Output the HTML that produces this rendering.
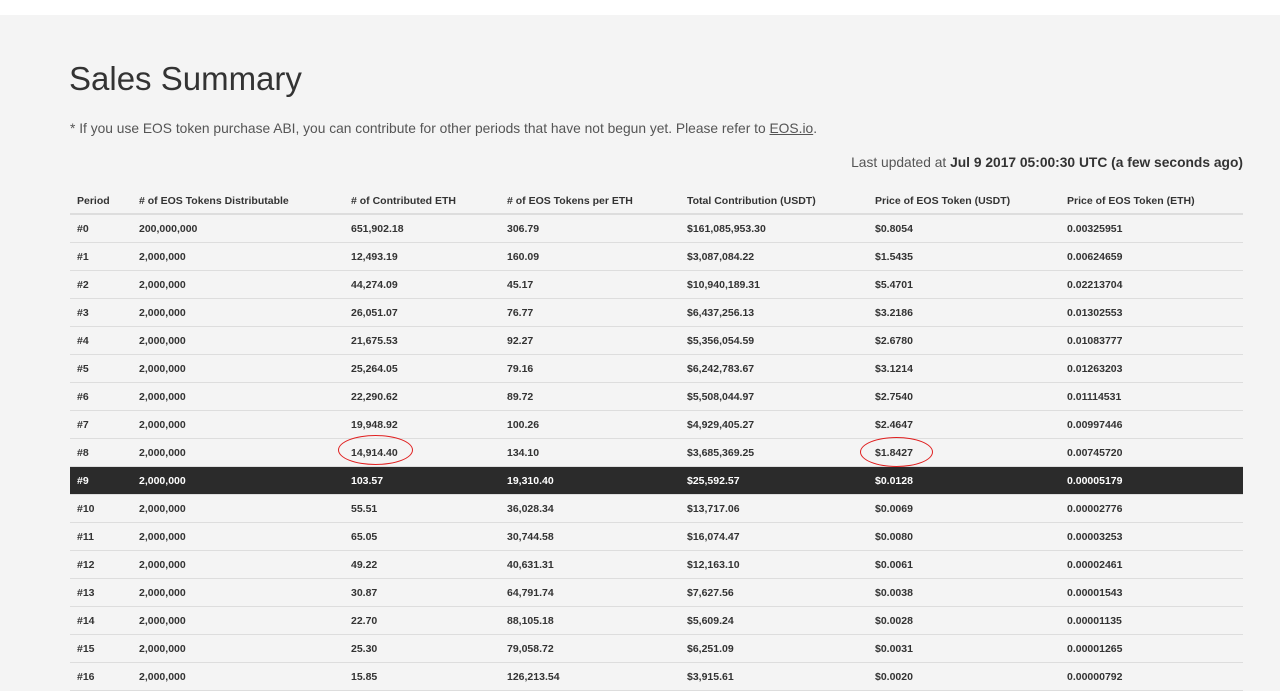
<!DOCTYPE html><html><head><style>
body{margin:0;background:#f4f4f4;font-family:"Liberation Sans",sans-serif;color:#333;width:1280px;height:689px;overflow:hidden;position:relative}
.top{position:absolute;left:0;top:0;width:1280px;height:15px;background:#fff}
h1{position:absolute;left:69px;top:60px;margin:0;font-weight:normal;font-size:33px;color:#333}
.note{position:absolute;left:70px;top:121px;font-size:13.8px;color:#555}
.note u{color:#555}
.upd{position:absolute;right:37px;top:155px;font-size:13.8px;color:#555}
.upd b{color:#333}
table{position:absolute;left:70px;top:189px;width:1173px;border-collapse:collapse;font-size:10.5px;font-weight:bold}
td,th{text-align:left;padding:0 0 0 7px;height:27px;border-bottom:1px solid #ddd;white-space:nowrap}
th{height:24px;border-bottom:2px solid #ddd}
tr.d td{background:#2b2b2b;color:#fff}
.c{position:absolute;border:1.5px solid #e02020;border-radius:50%}
</style></head><body>
<div class="top"></div>
<h1>Sales Summary</h1>
<div class="note">* If you use EOS token purchase ABI, you can contribute for other periods that have not begun yet. Please refer to <u>EOS.io</u>.</div>
<div class="upd">Last updated at <b>Jul 9 2017 05:00:30 UTC (a few seconds ago)</b></div>
<table>
<colgroup><col style="width:62px"><col style="width:212px"><col style="width:156px"><col style="width:180px"><col style="width:188px"><col style="width:192px"><col></colgroup>
<tr><th>Period</th><th># of EOS Tokens Distributable</th><th># of Contributed ETH</th><th># of EOS Tokens per ETH</th><th>Total Contribution (USDT)</th><th>Price of EOS Token (USDT)</th><th>Price of EOS Token (ETH)</th></tr>
<tr><td>#0</td><td>200,000,000</td><td>651,902.18</td><td>306.79</td><td>$161,085,953.30</td><td>$0.8054</td><td>0.00325951</td></tr>
<tr><td>#1</td><td>2,000,000</td><td>12,493.19</td><td>160.09</td><td>$3,087,084.22</td><td>$1.5435</td><td>0.00624659</td></tr>
<tr><td>#2</td><td>2,000,000</td><td>44,274.09</td><td>45.17</td><td>$10,940,189.31</td><td>$5.4701</td><td>0.02213704</td></tr>
<tr><td>#3</td><td>2,000,000</td><td>26,051.07</td><td>76.77</td><td>$6,437,256.13</td><td>$3.2186</td><td>0.01302553</td></tr>
<tr><td>#4</td><td>2,000,000</td><td>21,675.53</td><td>92.27</td><td>$5,356,054.59</td><td>$2.6780</td><td>0.01083777</td></tr>
<tr><td>#5</td><td>2,000,000</td><td>25,264.05</td><td>79.16</td><td>$6,242,783.67</td><td>$3.1214</td><td>0.01263203</td></tr>
<tr><td>#6</td><td>2,000,000</td><td>22,290.62</td><td>89.72</td><td>$5,508,044.97</td><td>$2.7540</td><td>0.01114531</td></tr>
<tr><td>#7</td><td>2,000,000</td><td>19,948.92</td><td>100.26</td><td>$4,929,405.27</td><td>$2.4647</td><td>0.00997446</td></tr>
<tr><td>#8</td><td>2,000,000</td><td>14,914.40</td><td>134.10</td><td>$3,685,369.25</td><td>$1.8427</td><td>0.00745720</td></tr>
<tr class="d"><td>#9</td><td>2,000,000</td><td>103.57</td><td>19,310.40</td><td>$25,592.57</td><td>$0.0128</td><td>0.00005179</td></tr>
<tr><td>#10</td><td>2,000,000</td><td>55.51</td><td>36,028.34</td><td>$13,717.06</td><td>$0.0069</td><td>0.00002776</td></tr>
<tr><td>#11</td><td>2,000,000</td><td>65.05</td><td>30,744.58</td><td>$16,074.47</td><td>$0.0080</td><td>0.00003253</td></tr>
<tr><td>#12</td><td>2,000,000</td><td>49.22</td><td>40,631.31</td><td>$12,163.10</td><td>$0.0061</td><td>0.00002461</td></tr>
<tr><td>#13</td><td>2,000,000</td><td>30.87</td><td>64,791.74</td><td>$7,627.56</td><td>$0.0038</td><td>0.00001543</td></tr>
<tr><td>#14</td><td>2,000,000</td><td>22.70</td><td>88,105.18</td><td>$5,609.24</td><td>$0.0028</td><td>0.00001135</td></tr>
<tr><td>#15</td><td>2,000,000</td><td>25.30</td><td>79,058.72</td><td>$6,251.09</td><td>$0.0031</td><td>0.00001265</td></tr>
<tr><td>#16</td><td>2,000,000</td><td>15.85</td><td>126,213.54</td><td>$3,915.61</td><td>$0.0020</td><td>0.00000792</td></tr>
</table>
<div class="c" style="left:338px;top:435px;width:73px;height:28px"></div>
<div class="c" style="left:860px;top:437px;width:71px;height:28px"></div>
</body></html>
